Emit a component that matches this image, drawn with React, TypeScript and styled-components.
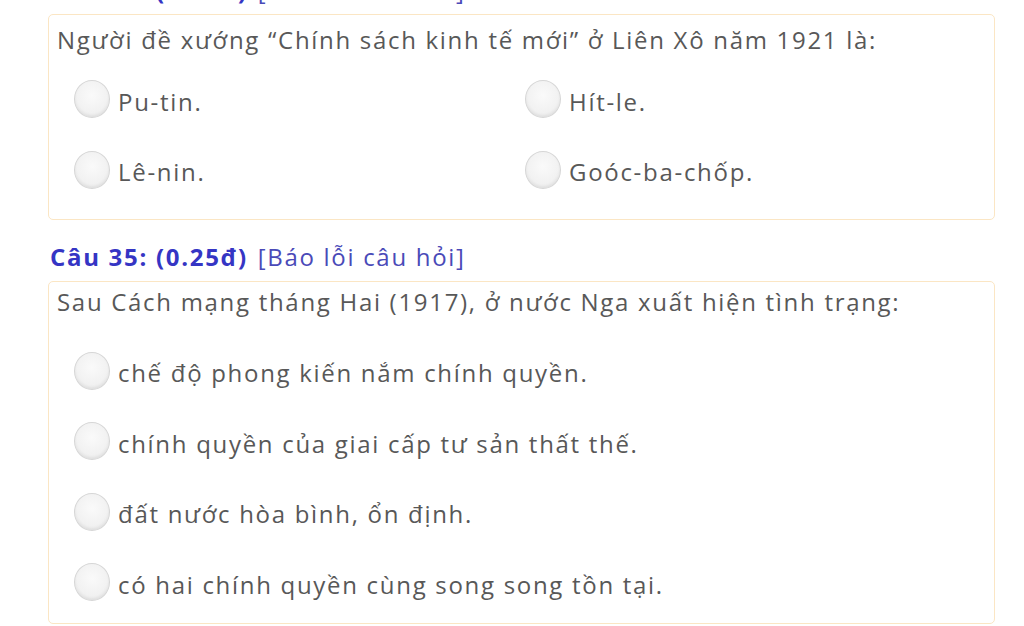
import React from 'react';
import styled, { createGlobalStyle } from 'styled-components';

const GlobalStyle = createGlobalStyle`
    html, body {
        margin: 0;
        padding: 0;
        background: #ffffff;
        overflow: hidden;
    }
    body {
        font-family: "Open Sans", "Noto Sans", sans-serif;
        letter-spacing: 1.7px;
    }
`;

interface IQuestion {
    no: number;
    point: string;
    text: string;
    options: string[];
    columns: number;
    // spacing differs a bit between the two cards in the screenshot
    top: number;
    gap: number;
    bottom: number;
}

const questions: IQuestion[] = [
    {
        no: 34,
        point: '0.25đ',
        text: 'Người đề xướng “Chính sách kinh tế mới” ở Liên Xô năm 1921 là:',
        options: ['Pu-tin.', 'Hít-le.', 'Lê-nin.', 'Goóc-ba-chốp.'],
        columns: 2,
        top: 8,
        gap: 25,
        bottom: 28,
    },
    {
        no: 35,
        point: '0.25đ',
        text: 'Sau Cách mạng tháng Hai (1917), ở nước Nga xuất hiện tình trạng:',
        options: [
            'chế độ phong kiến nắm chính quyền.',
            'chính quyền của giai cấp tư sản thất thế.',
            'đất nước hòa bình, ổn định.',
            'có hai chính quyền cùng song song tồn tại.',
        ],
        columns: 1,
        top: 3,
        gap: 35,
        bottom: 20,
    },
];

const Page = styled.div`
    width: 1024px;
    height: 626px;
    overflow: hidden;
`;

const List = styled.div`
    margin-top: -34px;
    padding: 0 29px 0 48px;
    display: flex;
    flex-direction: column;
`;

const Header = styled.div`
    height: 48px;
    padding-left: 2px;
    display: flex;
    align-items: center;
    gap: 10px;
    font-size: 24px;
`;

const Number = styled.span`
    color: #3535c4;
    font-weight: 700;
`;

const Report = styled.span`
    color: #4a4ab8;
`;

const Card = styled.div<{ $top: number; $bottom: number }>`
    border: 1.5px solid #fbe6c4;
    border-radius: 5px;
    padding: ${p => p.$top}px 8px ${p => p.$bottom}px;
    margin-bottom: 13px;
    color: #585858;
    font-size: 24px;
`;

const Prompt = styled.div<{ $gap: number }>`
    line-height: 34px;
    margin-bottom: ${p => p.$gap}px;
`;

const Options = styled.div<{ $cols: number }>`
    display: grid;
    grid-template-columns: repeat(${p => p.$cols}, 1fr);
    row-gap: 32.5px;
    padding: 0 10px 0 17px;
`;

const Option = styled.label`
    display: flex;
    align-items: center;
    height: 38px;
`;

const Radio = styled.span`
    width: 36px;
    height: 38px;
    border-radius: 50%;
    box-sizing: border-box;
    border: 1.5px solid #d6d6d6;
    background: radial-gradient(circle at 50% 40%, #fafafa 0%, #f0f0f0 70%, #e4e4e4 100%);
    box-shadow: inset 0 -2px 3px rgba(0, 0, 0, 0.06);
    margin-right: 8px;
    margin-top: -4px;
    flex-shrink: 0;
`;

const App = () => {
    return (
        <Page>
            <GlobalStyle />
            <List>
                {questions.map(q => (
                    <React.Fragment key={q.no}>
                        <Header>
                            <Number>Câu {q.no}: ({q.point})</Number>
                            <Report>[Báo lỗi câu hỏi]</Report>
                        </Header>
                        <Card $top={q.top} $bottom={q.bottom}>
                            <Prompt $gap={q.gap}>{q.text}</Prompt>
                            <Options $cols={q.columns}>
                                {q.options.map(o => (
                                    <Option key={o}>
                                        <Radio />
                                        {o}
                                    </Option>
                                ))}
                            </Options>
                        </Card>
                    </React.Fragment>
                ))}
            </List>
        </Page>
    );
};

export default App;
